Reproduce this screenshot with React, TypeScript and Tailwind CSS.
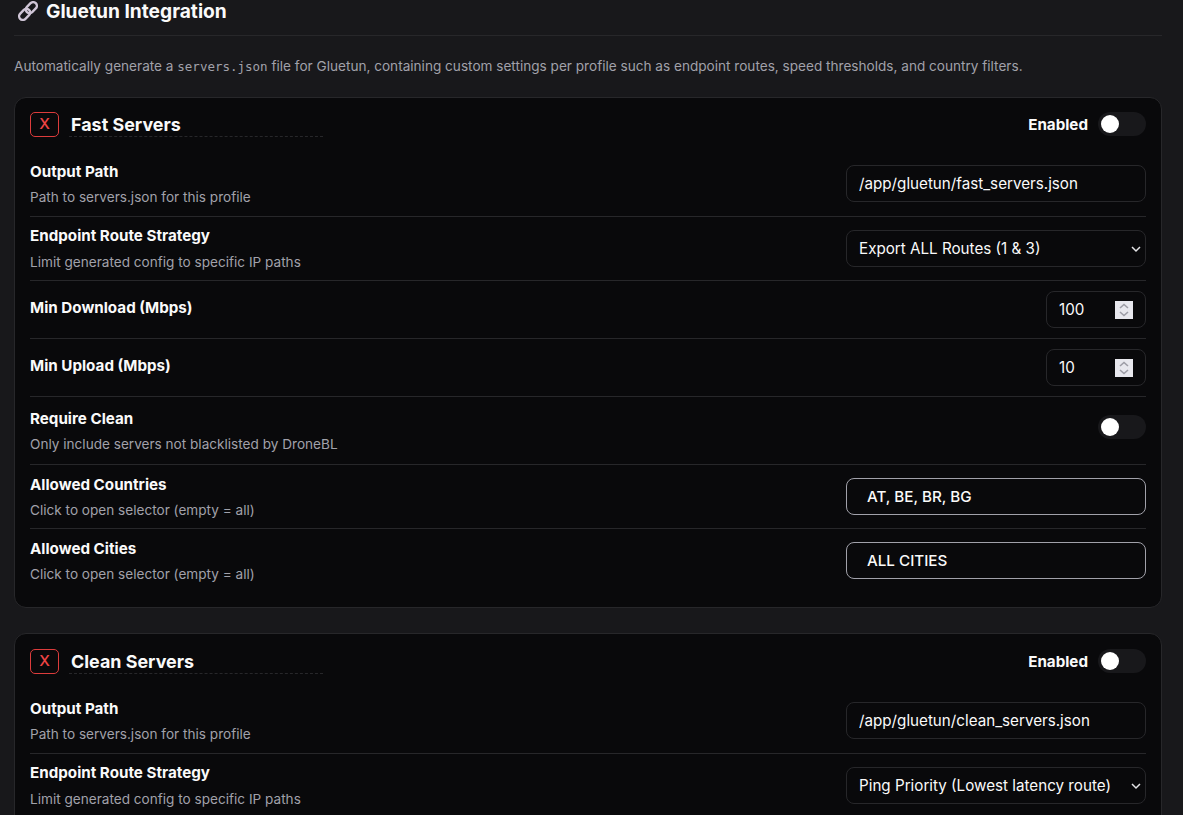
import React from "react";

const font = { fontFamily: "Inter, 'Liberation Sans', sans-serif" };

function LinkIcon() {
  return (
    <svg width="20" height="20" viewBox="0 0 20 20" fill="none" className="shrink-0 mt-[1px]">
      <g stroke="#cfc5d6" strokeWidth="2.4" fill="none" transform="rotate(-45 10 10)">
        <rect x="-1" y="6.3" width="12.5" height="7.4" rx="3.7" />
        <rect x="8.5" y="6.3" width="12.5" height="7.4" rx="3.7" />
      </g>
    </svg>
  );
}

function Toggle({ raised }: { raised?: boolean }) {
  return (
    <div className={"w-12 h-6 rounded-full bg-[#18181b] flex items-center pl-[3px] shrink-0 " + (raised ? "mb-2" : "")}>
      <div className="w-[18px] h-[18px] rounded-full bg-white" />
    </div>
  );
}

function Chevron() {
  return (
    <svg width="10" height="10" viewBox="0 0 10 10" className="absolute right-[5px] top-[14px]" fill="none">
      <path d="M1 3 L5 7 L9 3" stroke="#e4e4e7" strokeWidth="1.5" />
    </svg>
  );
}

function Spinner() {
  return (
    <svg width="18" height="18" viewBox="0 0 18 18" className="shrink-0">
      <rect width="18" height="18" fill="#e8e8ee" />
      <path d="M5 7 L9 3.5 L13 7" stroke="#9d9da6" strokeWidth="1.6" fill="none" />
      <path d="M5 11 L9 14.5 L13 11" stroke="#9d9da6" strokeWidth="1.6" fill="none" />
    </svg>
  );
}

function TextBox({ value }: { value: string }) {
  return (
    <input
      readOnly
      value={value}
      className="w-[300px] h-[37px] shrink-0 rounded-lg border border-[#27272a] bg-[#09090b] px-3 text-[15.2px] text-[#fafafa] outline-none"
    />
  );
}

function SelectBox({ value }: { value: string }) {
  return (
    <div className="relative w-[300px] h-[37px] shrink-0">
      <select
        defaultValue={value}
        className="w-full h-full appearance-none rounded-lg border border-[#27272a] bg-[#09090b] px-3 pt-[2px] text-[15.2px] text-[#fafafa] outline-none"
      >
        <option>{value}</option>
      </select>
      <Chevron />
    </div>
  );
}

function NumberBox({ value }: { value: string }) {
  return (
    <div className="w-[100px] h-[37px] shrink-0 rounded-lg border border-[#27272a] bg-[#09090b] pl-3 pr-[12px] flex items-center justify-between text-[15.2px] text-[#fafafa]">
      <span className="pt-[2px]">{value}</span>
      <Spinner />
    </div>
  );
}

function PickerButton({ value }: { value: string }) {
  return (
    <button className="w-[300px] h-[37px] shrink-0 rounded-lg border border-[#a1a1aa] bg-transparent px-5 pt-[2px] text-left text-[15.2px] font-medium text-[#fafafa]">
      {value}
    </button>
  );
}

function Row({
  label,
  desc,
  children,
  last,
  tall,
  first,
  high,
}: {
  label: string;
  desc?: string;
  children: React.ReactNode;
  last?: boolean;
  tall?: boolean;
  first?: boolean;
  high?: boolean;
}) {
  const pad = tall ? "pt-3 pb-[11px] " : !desc ? "py-[10px] " : first ? "pt-[9px] pb-[10px] " : "py-[9px] ";
  const col = !desc ? "pb-1" : high ? "flex flex-col gap-[7px]" : tall ? "flex flex-col gap-[6px]" : "flex flex-col gap-[6px] pt-[1px]";
  return (
    <div className={"flex items-center justify-between " + pad + (last ? "" : "border-b border-[#27272a]")}>
      <div className={col}>
        <div className="text-[15.2px] leading-[20px] font-bold text-[#fafafa]">{label}</div>
        {desc && <div className="text-[13.6px] leading-[18px] text-[#a1a1aa]">{desc}</div>}
      </div>
      {children}
    </div>
  );
}

function Card({ name, path, route, full }: { name: string; path: string; route: string; full: boolean }) {
  return (
    <section className={"rounded-xl border border-[#27272a] bg-[#09090b] px-[15px] pb-[15px] " + (full ? "pt-[14px]" : "pt-[15px]")}>
      <div className="flex items-center justify-between mb-[15px]">
        <div className="flex items-center gap-[10px]">
          <button className="w-[29px] h-[25px] rounded-[5px] border border-[#dc3c3c] text-[#ef4444] text-[15.2px] font-medium flex items-center justify-center">
            X
          </button>
          <div className="w-[254px] h-[25px] px-[2px] border-b border-dashed border-[#27272a] text-[17.92px] leading-[25px] font-bold text-[#fafafa]">
            {name}
          </div>
        </div>
        <div className="flex items-center gap-[10px]">
          <span className="pt-[2px] text-[15.2px] font-bold text-[#fafafa]">Enabled</span>
          <Toggle />
        </div>
      </div>
      <Row label="Output Path" desc="Path to servers.json for this profile" first>
        <TextBox value={path} />
      </Row>
      <Row label="Endpoint Route Strategy" desc="Limit generated config to specific IP paths" high>
        <SelectBox value={route} />
      </Row>
      {full && (
        <>
          <Row label="Min Download (Mbps)">
            <NumberBox value="100" />
          </Row>
          <Row label="Min Upload (Mbps)">
            <NumberBox value="10" />
          </Row>
          <Row label="Require Clean" desc="Only include servers not blacklisted by DroneBL" tall>
            <Toggle raised />
          </Row>
          <Row label="Allowed Countries" desc="Click to open selector (empty = all)">
            <PickerButton value="AT, BE, BR, BG" />
          </Row>
          <Row label="Allowed Cities" desc="Click to open selector (empty = all)" last>
            <PickerButton value="ALL CITIES" />
          </Row>
        </>
      )}
    </section>
  );
}

export default function App() {
  return (
    <div style={font} className="h-[815px] overflow-hidden bg-[#18181b] pl-[14px] pr-[21px]">
      <header className="h-9 border-b border-[#27272a] flex items-start gap-[8px] pl-1">
        <LinkIcon />
        <h2 className="text-[19.2px] leading-[22px] font-bold text-[#fafafa]">Gluetun Integration</h2>
      </header>
      <p className="mt-[21px] mb-[21px] text-[13.6px] leading-[18px] text-[#a1a1aa]">
        Automatically generate a <code className="font-['DejaVu_Sans_Mono',monospace] text-[12.5px]">servers.json</code> file for
        Gluetun, containing custom settings per profile such as endpoint routes, speed thresholds, and country filters.
      </p>
      <div className="flex flex-col gap-[25px]">
        <Card name="Fast Servers" path="/app/gluetun/fast_servers.json" route="Export ALL Routes (1 & 3)" full />
        <Card name="Clean Servers" path="/app/gluetun/clean_servers.json" route="Ping Priority (Lowest latency route)" full={false} />
      </div>
    </div>
  );
}
